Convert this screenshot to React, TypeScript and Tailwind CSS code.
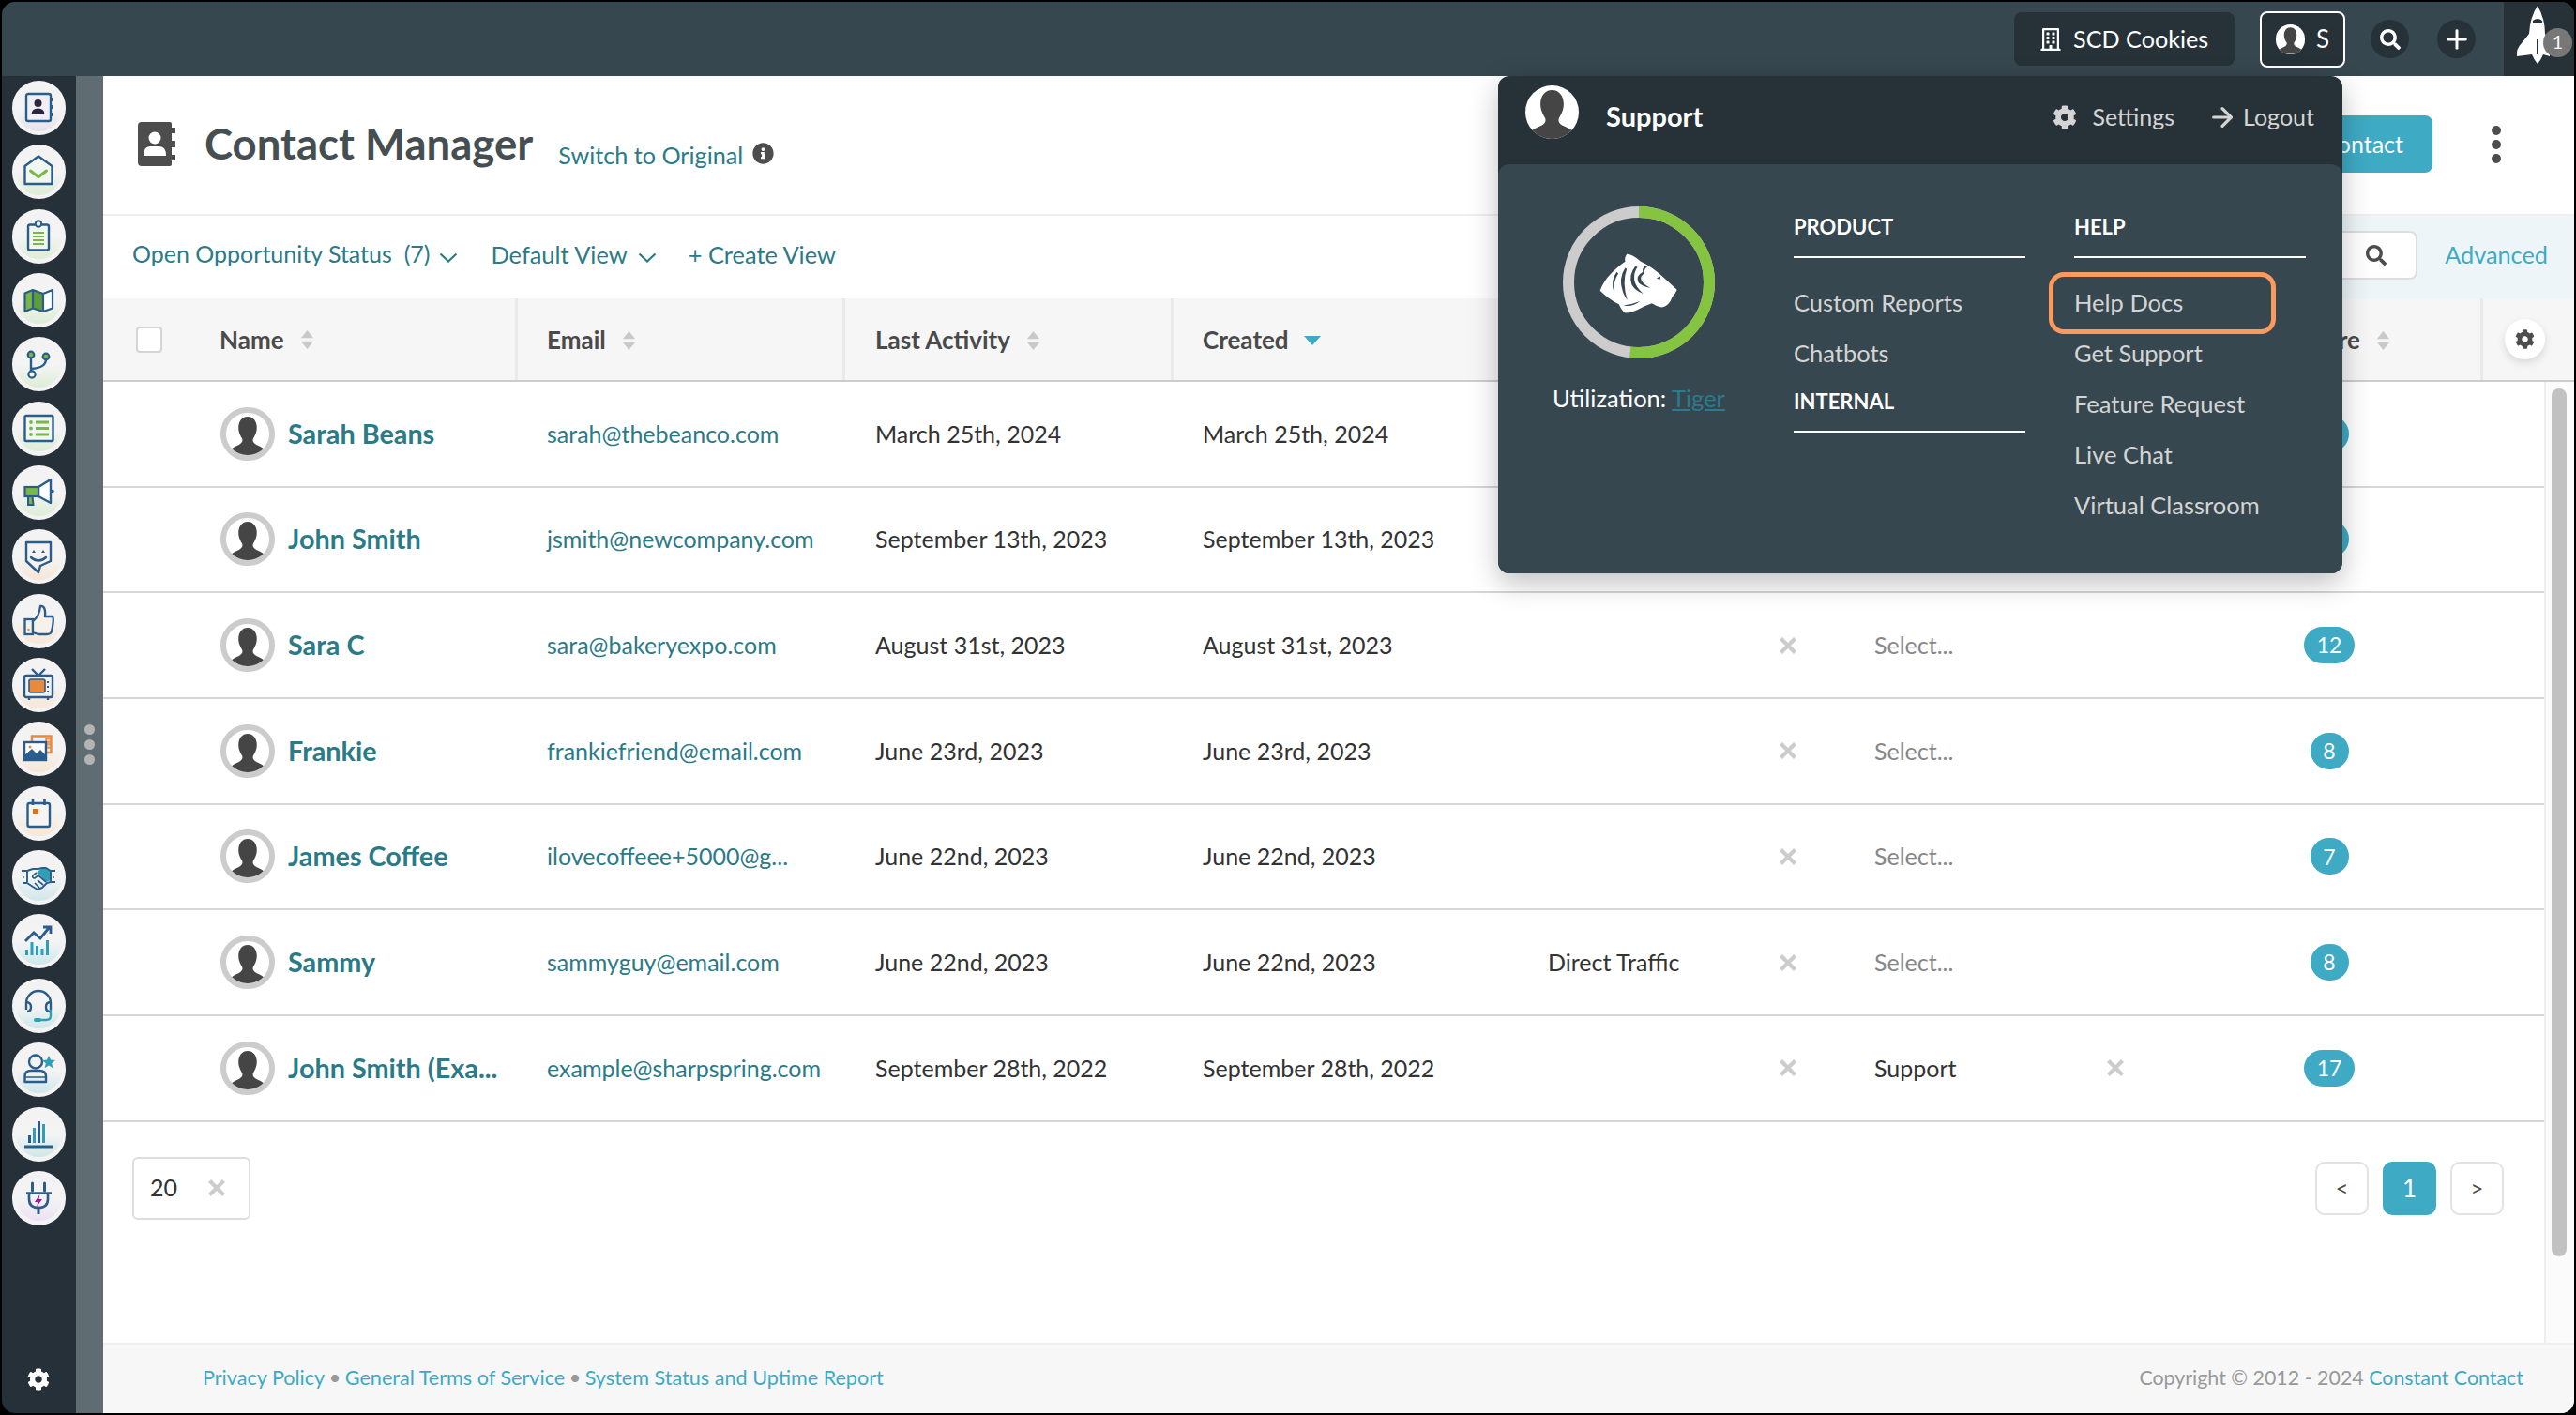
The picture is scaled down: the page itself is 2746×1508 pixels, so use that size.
import React from "react";
import { FaCog, FaSearch, FaRegBuilding, FaInfoCircle } from "react-icons/fa";
import { ArrowRight, Plus } from "lucide-react";

const B = "#2a5c8c";
const G = "#7ab648";
const O = "#e9893c";
const T = "#2f9fb8";

const navIcons: { tint: string; svg: React.ReactNode }[] = [
  {
    tint: "to-[#e6e2ec]",
    svg: (
      <>
        <rect x="7" y="5" width="26" height="29" rx="2" fill="#f1eff5" stroke={B} strokeWidth="2.4" />
        <rect x="32" y="9" width="3" height="4" fill={B} />
        <rect x="32" y="17" width="3" height="4" fill={B} />
        <rect x="32" y="25" width="3" height="4" fill={B} />
        <circle cx="19.5" cy="15" r="4" fill="#2b2540" />
        <path d="M12.500 27 q0-6.500 7-6.500 q7 0 7 6.500 z" fill="#2b2540" />
      </>
    ),
  },
  {
    tint: "to-[#dcedd5]",
    svg: (
      <>
        <path d="M20 3.500 L34.500 14 V33 H5.500 V14 Z" fill="#f2f6f0" stroke={B} strokeWidth="2.400" strokeLinejoin="round" />
        <path d="M11.500 19 L20 25.500 L28.500 19" fill="none" stroke={G} strokeWidth="3" strokeLinecap="round" />
      </>
    ),
  },
  {
    tint: "to-[#dcedd5]",
    svg: (
      <>
        <rect x="9" y="7.500" width="22" height="27" rx="2" fill="#f2f6f0" stroke={B} strokeWidth="2.400" />
        <circle cx="20" cy="6.500" r="3.200" fill="#f2f6f0" stroke={B} strokeWidth="2" />
        <path d="M14 16 H26 M14 20 H26 M14 24 H26 M14 28 H26" stroke={G} strokeWidth="2" />
      </>
    ),
  },
  {
    tint: "to-[#dcedd5]",
    svg: (
      <>
        <path d="M5.500 12.500 L14 9 V28.500 L5.500 32 Z" fill={G} />
        <path d="M14 9 L25 13 V32 L14 28.500 Z" fill="#5d9c38" />
        <path d="M25 13 L35 9 V28.500 L25 32 Z" fill="#fff" />
        <path d="M5.500 12.500 L14 9 L25 13 L35 9 V28.500 L25 32 L14 28.500 L5.500 32 Z M14 9 V28.500 M25 13 V32" fill="none" stroke={B} strokeWidth="2.200" strokeLinejoin="round" />
      </>
    ),
  },
  {
    tint: "to-[#dcedd5]",
    svg: (
      <>
        <path d="M12 13 V30 M12 25 Q28 24 28 15" fill="none" stroke={B} strokeWidth="2.400" />
        <circle cx="12" cy="10" r="3.300" fill={G} stroke={B} strokeWidth="2.200" />
        <circle cx="28" cy="12" r="3.300" fill={G} stroke={B} strokeWidth="2.200" />
        <circle cx="13" cy="31" r="3.600" fill="#f2f6f0" stroke={B} strokeWidth="2.200" />
      </>
    ),
  },
  {
    tint: "to-[#dcedd5]",
    svg: (
      <>
        <rect x="5.500" y="6" width="30" height="27" rx="1.500" fill="#f2f6f0" stroke={B} strokeWidth="2.400" />
        <circle cx="12" cy="13" r="1.900" fill={G} />
        <circle cx="12" cy="19.500" r="1.900" fill={G} />
        <circle cx="12" cy="26" r="1.900" fill={G} />
        <path d="M17 13 H31 M17 19.500 H31 M17 26 H31" stroke={G} strokeWidth="3" />
      </>
    ),
  },
  {
    tint: "to-[#dcedd5]",
    svg: (
      <>
        <path d="M20 14 L33 6 V31 L20 24 Z" fill="#fff" stroke={B} strokeWidth="2.400" strokeLinejoin="round" />
        <rect x="5.500" y="14" width="14.500" height="10" fill={G} stroke={B} strokeWidth="2.200" />
        <path d="M9 24 V33 H14.500 L13.500 24 Z" fill={G} stroke={B} strokeWidth="2" />
        <circle cx="35" cy="18.500" r="1.800" fill={B} />
      </>
    ),
  },
  {
    tint: "to-[#f7e6d5]",
    svg: (
      <>
        <path d="M7 5 H33 V25 L22 30 L20 37 L7 25 Z" fill="#f5f3f1" stroke={B} strokeWidth="2.400" strokeLinejoin="round" />
        <path d="M13 16 l2 -3 l2 3 Z M23 16 l2 -3 l2 3 Z" fill={B} />
        <path d="M12 21 Q20 28 28 21" fill="none" stroke={B} strokeWidth="2.400" strokeLinecap="round" />
      </>
    ),
  },
  {
    tint: "to-[#f7e6d5]",
    svg: (
      <>
        <rect x="5.500" y="18" width="8.500" height="16" fill="#f5f0ea" stroke={B} strokeWidth="2.300" />
        <circle cx="9.500" cy="29" r="1.200" fill={O} />
        <path d="M14 20 Q21 15 22 4 Q28 3 27 15 H35 Q37 17 34 31 Q33 34 29 34 H20 L14 32 Z" fill="#f7f1ea" stroke={B} strokeWidth="2.300" strokeLinejoin="round" />
      </>
    ),
  },
  {
    tint: "to-[#f7e6d5]",
    svg: (
      <>
        <path d="M13 3 L20 10 L27 3" fill="none" stroke={B} strokeWidth="2.400" />
        <rect x="5" y="10" width="30" height="23" rx="2" fill="#f5f0ea" stroke={B} strokeWidth="2.400" />
        <rect x="10" y="14" width="17" height="14" rx="2" fill={O} stroke={B} strokeWidth="1.600" />
        <path d="M30 16 v2 M30 21 v2 M30 26 v2" stroke={B} strokeWidth="2" />
        <path d="M10 33 v3 M30 33 v3" stroke={B} strokeWidth="2.400" />
      </>
    ),
  },
  {
    tint: "to-[#f7e6d5]",
    svg: (
      <>
        <path d="M13 12 V6.500 H33.500 V24 H28" fill="none" stroke={O} strokeWidth="2.400" />
        <path d="M28 9 h5 v4 h-5 z M28 15 h5 v4 h-5 z" fill="#f3c59a" stroke={O} strokeWidth="1.500" />
        <rect x="5" y="13" width="23" height="19" fill="#fff" stroke={B} strokeWidth="2.400" />
        <path d="M5 32 V27 L13 20 L18 25 L22 21 L28 27 V32 Z" fill={B} />
        <circle cx="11" cy="18" r="1.500" fill={O} />
      </>
    ),
  },
  {
    tint: "to-[#f7e6d5]",
    svg: (
      <>
        <rect x="8.500" y="9" width="23.500" height="25" rx="2" fill="#f7f4f1" stroke={B} strokeWidth="2.400" />
        <path d="M14 5 V11 M26.500 5 V11" stroke={B} strokeWidth="2.600" />
        <rect x="14" y="15" width="6" height="5.500" fill="#d9760f" />
      </>
    ),
  },
  {
    tint: "to-[#cfe7ea]",
    svg: (
      <>
        <path d="M18 15 L24 10 H28 L33 13 V23 L28 25 L21 17 Z" fill={T} />
        <path d="M2 13 H8 L14 11 H20 L24 10 H28 L33 13 H38 M8 13 V25 M33 13 V25 M3 26 H8 L14 30 L19 33 L24 31 L29 26 L33 25 H38" fill="none" stroke={B} strokeWidth="1.900" strokeLinejoin="round" />
        <path d="M21 17 L16 21 Q13 21 14 18 L18 15 M28 25 L20 18 M25 28 L19 23 M21 31 L16 26" fill="none" stroke={B} strokeWidth="1.700" />
        <circle cx="4" cy="20" r="0.900" fill={B} />
        <circle cx="36" cy="20" r="0.900" fill={B} />
      </>
    ),
  },
  {
    tint: "to-[#cfe7ea]",
    svg: (
      <>
        <path d="M6 20 L15 11 L22 17 L31 6 M25 5 H33 V12" fill="none" stroke={B} strokeWidth="2.800" />
        <path d="M6 29 h3 v6 h-3 z M11.500 21 h3 v14 h-3 z M17 25 h3 v10 h-3 z M22.500 28 h3 v7 h-3 z M28 19 h3 v16 h-3 z" fill={T} />
      </>
    ),
  },
  {
    tint: "to-[#cfe7ea]",
    svg: (
      <>
        <path d="M7 24 V17 A13 13 0 0 1 33 17 V24" fill="none" stroke={B} strokeWidth="2.400" />
        <path d="M7 16 Q12 16 12 21 Q12 26 8 26 M33 16 Q28 16 28 21 Q28 26 32 26" fill="none" stroke={B} strokeWidth="2.400" />
        <path d="M33 24 V31 Q33 35 28 35 H20" fill="none" stroke={T} strokeWidth="2.400" />
        <rect x="15" y="33" width="8" height="4" rx="2" fill={T} />
      </>
    ),
  },
  {
    tint: "to-[#cfe7ea]",
    svg: (
      <>
        <circle cx="17" cy="11.500" r="7" fill="none" stroke={B} strokeWidth="2.400" />
        <path d="M5.500 33 V27 Q5.500 21 12 21 H21 Q28 21 28 27 V33 Z" fill="none" stroke={B} strokeWidth="2.400" strokeLinejoin="round" />
        <path d="M6 28 H27" stroke={B} strokeWidth="1.500" />
        <path d="M31 5 l2 4.500 l5 .5 l-3.800 3.300 l1.200 5 l-4.400 -2.700 l-4.400 2.700 l1.200 -5 l-3.800 -3.300 l5 -.5 z" fill={T} />
      </>
    ),
  },
  {
    tint: "to-[#cfe7ea]",
    svg: (
      <>
        <path d="M9 21 h3 v8 h-3 z M19 6 h3 v23 h-3 z" fill={B} />
        <path d="M14 13 h3 v16 h-3 z M24 9 h3 v20 h-3 z" fill={T} />
        <path d="M5 33 H35" stroke={B} strokeWidth="3" />
      </>
    ),
  },
  {
    tint: "to-[#ece2f3]",
    svg: (
      <>
        <path d="M13.500 4 V12 M26.500 4 V12" stroke={B} strokeWidth="3" strokeLinecap="round" />
        <path d="M7 14.500 H34" stroke={B} strokeWidth="2.400" />
        <path d="M10 15 V21 Q10 30 20 30 Q30 30 30 21 V15" fill="none" stroke={B} strokeWidth="2.600" />
        <path d="M20 30 V37" stroke={B} strokeWidth="3" />
        <path d="M21.500 16 L16 24 H19.500 L18 29 L24 21 H20.500 Z" fill="#8e1f8f" />
      </>
    ),
  },
];

function NavButton({ tint, children }: { tint: string; children: React.ReactNode }) {
  return (
    <div className="flex h-[58px] w-[57px] shrink-0 items-center justify-center rounded-full bg-[#f3f3f3]">
      <div className={`flex h-[49px] w-[49px] items-center justify-center rounded-full bg-gradient-to-b from-[#f2f2f2] via-[#f4f4f4] ${tint}`}>
        {children}
      </div>
    </div>
  );
}

function Silhouette({ className }: { className: string }) {
  return (
    <svg viewBox="0 0 46 46" className={className}>
      <path
        d="M23 4 C29 4 33 9 33 16 C33 21 31 25 29 28 C28 31 29 33 33 35 C38 37 41 39 42 42 L46 46 H0 L4 42 C5 39 8 37 13 35 C17 33 18 31 17 28 C15 25 13 21 13 16 C13 9 17 4 23 4 Z"
        fill="#454545"
      />
    </svg>
  );
}

function Avatar() {
  return (
    <div className="h-[57px] w-[58px] shrink-0 overflow-hidden rounded-full border-[6px] border-[#cccccc] bg-white">
      <Silhouette className="h-full w-full" />
    </div>
  );
}

function SortIcon({ active }: { active?: boolean }) {
  if (active) {
    return (
      <svg viewBox="0 0 18 10" className="ml-[16px] h-[10px] w-[18px]">
        <path d="M0 0 H18 L9 10 Z" fill="#3eaac4" />
      </svg>
    );
  }
  return (
    <svg viewBox="0 0 16 24" className="ml-[17px] h-[20px] w-[15px]">
      <path d="M8 0 L16 10 H0 Z M8 24 L0 14 H16 Z" fill="#c9c9c9" />
    </svg>
  );
}

function XMark() {
  return (
    <svg viewBox="0 0 18 18" className="h-[18px] w-[18px]">
      <path d="M1.500 1.500 L16.500 16.500 M16.500 1.500 L1.500 16.500" stroke="#cccccc" strokeWidth="4.200" />
    </svg>
  );
}

function Chevron({ className }: { className: string }) {
  return (
    <svg viewBox="0 0 20 11" className={`h-[11px] w-[20px] ${className}`}>
      <path d="M1.500 1.500 L10 9.500 L18.500 1.500" fill="none" stroke="#2b7a87" strokeWidth="2.200" />
    </svg>
  );
}

function Tiger() {
  return (
    <svg viewBox="260 200 260 200" className="h-[67px] w-[87px]">
      <path
        d="M350 208 Q368 208 395 232 Q430 248 470 285 L510 322 Q505 335 495 345 Q485 375 460 378 Q445 375 430 365 Q410 372 395 380 Q370 395 345 396 Q335 390 325 368 Q295 355 265 325 Q275 295 300 270 Q325 245 345 232 Q342 220 350 208 Z"
        fill="#fff"
      />
      <g fill="#37474f">
        <path d="M318 265 Q296 295 310 332 Q306 295 323 270 Z" />
        <path d="M345 252 Q322 285 338 330 Q344 345 352 355 Q334 300 350 256 Z" />
        <path d="M378 246 Q354 275 366 306 Q378 326 402 334 Q378 312 374 290 Q372 265 384 250 Z" />
        <path d="M402 265 Q376 278 388 300 Q400 312 426 316 Q402 304 396 290 Q392 278 406 270 Z" />
        <path d="M412 244 Q392 254 406 276 Q402 258 416 248 Z" />
        <path d="M338 372 Q368 378 392 358 Q368 368 338 372 Z" />
        <path d="M445 284 L458 280 L455 291 Z" />
      </g>
    </svg>
  );
}

const rows = [
  { name: "Sarah Beans", email: "sarah@thebeanco.com", last: "March 25th, 2024", created: "March 25th, 2024", source: "", select: "", x2: false, score: "" },
  { name: "John Smith", email: "jsmith@newcompany.com", last: "September 13th, 2023", created: "September 13th, 2023", source: "", select: "", x2: false, score: "" },
  { name: "Sara C", email: "sara@bakeryexpo.com", last: "August 31st, 2023", created: "August 31st, 2023", source: "", select: "Select...", x2: false, score: "12" },
  { name: "Frankie", email: "frankiefriend@email.com", last: "June 23rd, 2023", created: "June 23rd, 2023", source: "", select: "Select...", x2: false, score: "8" },
  { name: "James Coffee", email: "ilovecoffeee+5000@g...", last: "June 22nd, 2023", created: "June 22nd, 2023", source: "", select: "Select...", x2: false, score: "7" },
  { name: "Sammy", email: "sammyguy@email.com", last: "June 22nd, 2023", created: "June 22nd, 2023", source: "Direct Traffic", select: "Select...", x2: false, score: "8" },
  { name: "John Smith (Exa...", email: "example@sharpspring.com", last: "September 28th, 2022", created: "September 28th, 2022", source: "", select: "Support", x2: true, score: "17" },
];

export default function App() {
  return (
    <div className="relative h-[1508px] w-[2746px] overflow-hidden bg-black p-[2px] font-['Lato',sans-serif] text-[25px] text-[#333333]">
      <div className="flex h-full w-full flex-col overflow-hidden rounded-[14px]">
        {/* top bar */}
        <header className="flex h-[79px] shrink-0 items-center justify-end bg-[#37474f]">
          <div className="mr-[27px] flex h-[57px] w-[235px] items-center rounded-[8px] bg-[#263238] pl-[28px] text-[25.2px] text-white">
            <FaRegBuilding className="mr-[13px] h-[24px] w-[22px]" />
            SCD Cookies
          </div>
          <div className="mr-[27px] flex h-[60px] w-[91px] items-center rounded-[8px] border-2 border-white bg-[#263238] pl-[15px] text-[26px] text-white">
            <div className="mr-[12px] h-[32px] w-[31px] overflow-hidden rounded-full bg-white">
              <Silhouette className="h-full w-full" />
            </div>
            S
          </div>
          <div className="mr-[30px] flex h-[41px] w-[41px] items-center justify-center rounded-full bg-[#263238] text-white">
            <FaSearch className="h-[22px] w-[22px]" />
          </div>
          <div className="mr-[30px] flex h-[41px] w-[41px] items-center justify-center rounded-full bg-[#263238] text-white">
            <Plus className="h-[32px] w-[32px]" strokeWidth={2.2} />
          </div>
          <div className="relative h-full w-[75px] bg-[#263238]">
            <svg viewBox="0 0 40 62" className="ml-[13px] mt-[4px] h-[62px] w-[40px]">
              <path d="M23 0 Q31 14 31 30 L36 42 L36 54 L29 52 L26 58 L23 62 L20 58 L17 52 L1 54 Q0 46 6 40 L14 30 Q15 12 23 0 Z" fill="#fff" />
              <path d="M18 16 Q23 12 28 16 L28 19 L18 19 Z" fill="#263238" />
              <rect x="22" y="36" width="2" height="16" fill="#263238" />
            </svg>
            <div className="absolute left-[42px] top-[28px] flex h-[31px] w-[31px] items-center justify-center rounded-full bg-[#777777] text-[19px] text-white">
              1
            </div>
          </div>
        </header>

        <div className="flex min-h-0 flex-1">
          {/* icon rail */}
          <nav className="flex w-[79px] shrink-0 flex-col items-center gap-[10.35px] bg-[#263038] pr-[1px] pt-[5px]">
            {navIcons.map((n, i) => (
              <NavButton key={i} tint={n.tint}>
                <svg viewBox="0 0 40 40" className="h-[40px] w-[40px] shrink-0">
                  {n.svg}
                </svg>
              </NavButton>
            ))}
            <FaCog className="mt-auto mb-[24px] h-[24px] w-[24px] text-white" />
          </nav>
          <div className="flex w-[29px] shrink-0 flex-col items-center gap-[5px] bg-[#5f6d73] pt-[691px]">
            <span className="h-[11px] w-[11px] rounded-full bg-[#b4b4b4]" />
            <span className="h-[11px] w-[11px] rounded-full bg-[#b4b4b4]" />
            <span className="h-[11px] w-[11px] rounded-full bg-[#b4b4b4]" />
          </div>

          {/* main */}
          <main className="flex min-w-0 flex-1 flex-col bg-white">
            <div className="flex h-[149px] shrink-0 items-center border-b-2 border-[#eeeeee] pb-[2px] pl-[37px]">
              <svg viewBox="0 0 40 47" className="h-[47px] w-[40px]">
                <path d="M4 0 H34 Q36 0 36 2 V6 H40 V12 H36 V20 H40 V27 H36 V35 H40 V41 H36 V45 Q36 47 34 47 H4 Q0 47 0 43 V4 Q0 0 4 0 Z" fill="#4d4d4d" />
                <circle cx="18" cy="17" r="6.500" fill="#fff" />
                <path d="M6 36 Q6 26 13 26 H23 Q30 26 30 36 Z" fill="#fff" />
              </svg>
              <h1 className="ml-[31px] text-[45.5px] font-bold text-[#454f52]">Contact Manager</h1>
              <span className="ml-[27px] mt-[24px] text-[25.2px] text-[#2b7a87]">Switch to Original</span>
              <FaInfoCircle className="ml-[10px] mt-[20px] h-[23px] w-[23px] text-[#4d4d4d]" />
              <div className="ml-auto flex h-[61px] items-center rounded-[8px] bg-[#3eaac4] pl-[30px] pr-[31px] text-[25px] text-white">
                Add Contact
              </div>
              <div className="ml-[63px] mr-[78px] flex flex-col gap-[5px]">
                <span className="h-[10px] w-[10px] rounded-full bg-[#4d4d4d]" />
                <span className="h-[10px] w-[10px] rounded-full bg-[#4d4d4d]" />
                <span className="h-[10px] w-[10px] rounded-full bg-[#4d4d4d]" />
              </div>
            </div>

            <div className="flex h-[88px] shrink-0 items-center pl-[31px] text-[25.4px] text-[#2b7a87]">
              <div className="flex items-center pb-[6px]">
                <span className="text-[25px]">Open Opportunity Status&nbsp; (7)</span>
                <Chevron className="ml-[10px] mt-[8px]" />
                <span className="ml-[35px]">Default View</span>
                <Chevron className="ml-[11px] mt-[8px]" />
                <span className="ml-[34px]">+ Create View</span>
              </div>
              <div className="ml-auto flex h-full w-[1000px] items-center justify-end bg-[#edf5f8] pb-[4px] pr-[28px] text-[25.3px]">
                <div className="flex h-[52px] w-[500px] items-center justify-end rounded-[8px] border-2 border-[#dddddd] bg-white pr-[31px]">
                  <FaSearch className="h-[22px] w-[22px] text-[#4d4d4d]" />
                </div>
                <span className="ml-[29px] text-[#3eaac4]">Advanced</span>
              </div>
            </div>

            <div className="flex h-[89px] shrink-0 items-center border-b-2 border-[#cccccc] bg-[#f6f6f6] text-[26px] font-bold text-[#4a4a4a]">
              <div className="flex h-full w-[442px] items-center border-r-[3px] border-[#e9e9e9] pl-[35px]">
                <span className="h-[28px] w-[28px] rounded-[4px] border-2 border-[#d5d5d5] bg-white" />
                <span className="ml-[61px] pt-[2px]">Name</span>
                <SortIcon />
              </div>
              <div className="flex h-full w-[349px] items-center border-r-[3px] border-[#e9e9e9] pl-[31px] pt-[2px]">
                Email
                <SortIcon />
              </div>
              <div className="flex h-full w-[350px] items-center border-r-[3px] border-[#e9e9e9] pl-[32px] pt-[2px]">
                Last Activity
                <SortIcon />
              </div>
              <div className="flex h-full w-[1396px] items-center border-r-[3px] border-[#e9e9e9] pl-[31px] pt-[2px]">
                Created
                <SortIcon active />
                <div className="ml-auto mr-[96px] flex items-center">
                  Score
                  <SortIcon />
                </div>
              </div>
              <div className="relative flex h-full flex-1 items-center justify-center pr-[9px]">
                <div className="flex h-[43px] w-[43px] items-center justify-center rounded-full bg-white shadow-[0_4px_10px_rgba(0,0,0,0.12)]">
                  <FaCog className="h-[21px] w-[21px] text-[#4d4d4d]" />
                </div>
              </div>
            </div>

            <div className="flex min-h-0 flex-1">
              <div className="min-w-0 flex-1">
                {rows.map((r) => (
                  <div
                    key={r.name}
                    className="grid h-[112.67px] grid-cols-[125px_348px_350px_349px_368px_247px_101px_248px_154px_166px_146px] items-center border-b-2 border-[#d6d6d6]"
                  >
                    <span />
                    <div className="flex items-center">
                      <Avatar />
                      <span className="ml-[14px] whitespace-nowrap text-[28.8px] font-bold text-[#2b7a87]">{r.name}</span>
                    </div>
                    <span className="whitespace-nowrap text-[#2b7a87]">{r.email}</span>
                    <span>{r.last}</span>
                    <span>{r.created}</span>
                    <span>{r.source}</span>
                    <span>{r.select ? <XMark /> : null}</span>
                    <span className={r.select === "Support" ? "text-[#333333]" : "text-[#888888]"}>{r.select}</span>
                    <span>{r.x2 ? <XMark /> : null}</span>
                    <div className="flex justify-center">
                      <span className={`flex h-[39px] items-center justify-center rounded-full bg-[#3eaac4] text-[23px] text-white ${r.score.length > 1 ? "w-[54px]" : "w-[41px]"}`}>
                        {r.score}
                      </span>
                    </div>
                    <span />
                  </div>
                ))}
                <div className="flex items-start justify-between pl-[31px] pr-[43px] pt-[37px]">
                  <div className="flex h-[67px] w-[126px] items-center rounded-[6px] border-2 border-[#dddddd] pl-[17px] text-[#333333]">
                    20
                    <svg viewBox="0 0 18 18" className="ml-[33px] h-[18px] w-[18px]">
                      <path d="M1.500 1.500 L16.500 16.500 M16.500 1.500 L1.500 16.500" stroke="#cccccc" strokeWidth="4.200" />
                    </svg>
                  </div>
                  <div className="mt-[5px] flex gap-[15px]">
                    <span className="flex h-[57px] w-[57px] items-center justify-center rounded-[10px] border-2 border-[#e2e2e2] text-[24px] text-[#4a4a4a]">&lt;</span>
                    <span className="flex h-[57px] w-[57px] items-center justify-center rounded-[10px] bg-[#3eaac4] text-[26px] text-white">1</span>
                    <span className="flex h-[57px] w-[57px] items-center justify-center rounded-[10px] border-2 border-[#e2e2e2] text-[24px] text-[#4a4a4a]">&gt;</span>
                  </div>
                </div>
              </div>
              <div className="w-[32px] shrink-0 border-l-2 border-[#eeeeee] bg-[#fbfbfb] pl-[6px] pt-[7px]">
                <div className="h-[925px] w-[16px] rounded-full bg-[#c1c1c1]" />
              </div>
            </div>

            <footer className="flex h-[75px] shrink-0 items-center justify-between border-t-2 border-[#f0f0f0] bg-[#f7f7f7] pb-[3px] pl-[106px] pr-[54px] text-[21.6px] text-[#3eaac4]">
              <div className="flex items-center">
                <span>Privacy Policy</span>
                <span className="mx-[4.5px] text-[#999999]">•</span>
                <span>General Terms of Service</span>
                <span className="mx-[4.5px] text-[#999999]">•</span>
                <span>System Status and Uptime Report</span>
              </div>
              <div className="text-[21.4px] text-[#999999]">
                Copyright © 2012 - 2024 <span className="text-[#3eaac4]">Constant Contact</span>
              </div>
            </footer>
          </main>
        </div>
      </div>

      {/* account menu */}
      <div className="absolute left-[1597px] top-[81px] flex h-[530px] w-[900px] flex-col rounded-[12px] bg-[#263238] shadow-[0_10px_30px_rgba(0,0,0,0.25)]">
        <div className="flex h-[94px] shrink-0 items-center pl-[29px] text-[25px]">
          <div className="mt-[-18px] h-[57px] w-[57px] overflow-hidden rounded-full bg-white">
            <Silhouette className="h-full w-full" />
          </div>
          <span className="ml-[29px] mt-[-8px] text-[29px] font-bold text-white">Support</span>
          <FaCog className="ml-auto mt-[-6px] h-[26px] w-[26px] text-[#d4d4d4]" />
          <span className="ml-[16px] mt-[-6px] text-[#d4d4d4]">Settings</span>
          <ArrowRight className="ml-[35px] mt-[-6px] h-[32px] w-[32px] text-[#d4d4d4]" strokeWidth={2.4} />
          <span className="ml-[6px] mr-[30px] mt-[-6px] text-[#d4d4d4]">Logout</span>
        </div>
        <div className="flex min-h-0 flex-1 rounded-[12px] bg-[#37474f] text-[25.5px] text-[#d4d4d4]">
          <div className="flex w-[300px] shrink-0 flex-col items-center pt-[45px]">
            <div className="relative flex h-[162px] w-[162px] items-center justify-center">
              <svg viewBox="0 0 162 162" className="absolute inset-0 h-[162px] w-[162px] -rotate-90">
                <circle cx="81" cy="81" r="75" fill="none" stroke="#cccccc" strokeWidth="12" />
                <circle cx="81" cy="81" r="75" fill="none" stroke="#85c441" strokeWidth="12" pathLength={100} strokeDasharray="52 48" />
              </svg>
              <Tiger />
            </div>
            <div className="mt-[23px] whitespace-nowrap text-white">
              Utilization: <span className="text-[#2b7a8e] underline">Tiger</span>
            </div>
          </div>
          <div className="ml-[15px] w-[247px] shrink-0 pt-[40px]">
            <div className="h-[60px] border-b-2 border-white text-[22px] font-bold leading-[54px] text-white">PRODUCT</div>
            <div className="mt-[20px] flex h-[54px] items-center">Custom Reports</div>
            <div className="flex h-[54px] items-center">Chatbots</div>
            <div className="h-[58px] border-b-2 border-white text-[22px] font-bold leading-[49px] text-white">INTERNAL</div>
          </div>
          <div className="ml-[52px] w-[247px] shrink-0 pt-[40px]">
            <div className="h-[60px] border-b-2 border-white text-[22px] font-bold leading-[54px] text-white">HELP</div>
            <div className="relative mt-[20px] flex h-[54px] items-center">
              Help Docs
              <span className="absolute left-[-27px] top-[-5px] h-[66px] w-[242px] rounded-[16px] border-[5px] border-[#fb9a5f]" />
            </div>
            <div className="flex h-[54px] items-center">Get Support</div>
            <div className="flex h-[54px] items-center">Feature Request</div>
            <div className="flex h-[54px] items-center">Live Chat</div>
            <div className="flex h-[54px] items-center">Virtual Classroom</div>
          </div>
        </div>
      </div>
    </div>
  );
}
